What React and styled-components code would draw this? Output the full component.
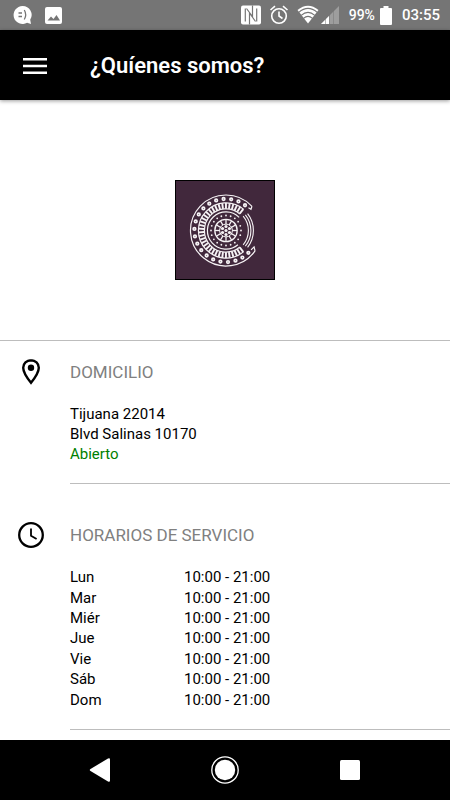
import React from "react";
import styled, { createGlobalStyle } from "styled-components";

const hours = [
    { day: "Lun", time: "10:00 - 21:00" },
    { day: "Mar", time: "10:00 - 21:00" },
    { day: "Miér", time: "10:00 - 21:00" },
    { day: "Jue", time: "10:00 - 21:00" },
    { day: "Vie", time: "10:00 - 21:00" },
    { day: "Sáb", time: "10:00 - 21:00" },
    { day: "Dom", time: "10:00 - 21:00" },
];

// centre of the mandala inside the 100x100 logo
const CX = 51;
const CY = 50.5;

const polar = (r, deg) => {
    const a = (deg * Math.PI) / 180;
    return [CX + r * Math.cos(a), CY + r * Math.sin(a)];
};

const arc = (r, from, to) => {
    const [x1, y1] = polar(r, from);
    const [x2, y2] = polar(r, to);
    const large = to - from > 180 ? 1 : 0;
    return `M${x1} ${y1}A${r} ${r} 0 ${large} 1 ${x2} ${y2}`;
};

const ring = (count, from, to) =>
    Array.from({ length: count }, (_, i) => from + ((to - from) * i) / (count - 1));

function Logo() {
    const [tx, ty] = polar(35.5, -43);
    const [bx, by] = polar(35.5, 35);

    return (
        <LogoBox viewBox="0 0 100 100" role="img" aria-label="Logo">
            <rect x="0.5" y="0.5" width="99" height="99" fill="#41283c" stroke="#000" />
            <g fill="none" stroke="#f6f3f5" strokeWidth="1.2">
                <path d={arc(35.5, 35, 317)} />
                <path d={`M${tx} ${ty}l-1 3l-2.500 -1.500`} />
                <path d={`M${bx} ${by}l-1 -4l-3 3`} />
                <path d={arc(27.6, 50, 310)} />
                <path d={arc(21.6, 50, 310)} />
                <path d={arc(18.6, 50, 315)} />
                <path d={arc(27.4, -38, 38)} strokeWidth="1.1" />
                <path d={arc(24.9, -39, 39)} strokeWidth="1.1" />
                <path d={arc(22.4, -40, 40)} strokeWidth="1.1" />
                {ring(34, 51, 309).map((deg) => {
                    const [x1, y1] = polar(21.8, deg);
                    const [x2, y2] = polar(27.4, deg);
                    return <line key={deg} x1={x1} y1={y1} x2={x2} y2={y2} strokeWidth="1.9" />;
                })}
                {ring(20, 45, 307).map((deg) => {
                    const [x, y] = polar(31.6, deg);
                    return <circle key={deg} cx={x} cy={y} r="1.3" strokeWidth="1.7" />;
                })}
                <circle cx={CX} cy={CY} r="11.2" strokeWidth="1.3" />
                <circle cx={CX} cy={CY} r="6.4" strokeWidth="1" />
                {ring(13, 0, 360).slice(1).map((deg) => {
                    const [x1, y1] = polar(6.2, deg);
                    const [x2, y2] = polar(11, deg);
                    return <line key={deg} x1={x1} y1={y1} x2={x2} y2={y2} strokeWidth="1.3" />;
                })}
            </g>
            <g fill="#f6f3f5">
                {ring(21, 0, 360).slice(1).map((deg) => {
                    const [x, y] = polar(15, deg);
                    return <circle key={deg} cx={x} cy={y} r="0.9" />;
                })}
                {ring(7, 30, 390).slice(1).map((deg) => {
                    const [x, y] = polar(4, deg);
                    return <circle key={deg} cx={x} cy={y} r="1.6" />;
                })}
                <circle cx={CX} cy={CY} r="1.6" />
            </g>
        </LogoBox>
    );
}

function StatusBar() {
    return (
        <Status>
            <StatusGroup $gap={12}>
                <svg width="20" height="20" viewBox="0 0 20 20">
                    <path d="M9.500 1a9 9 0 1 0 4.600 16.800L18 19l-0.800-4.200A9 9 0 0 0 9.500 1z" fill="#fff" />
                    <g fill="none" stroke="#757575" strokeWidth="1.300">
                        <path d="M5.500 8h3.500M5.500 11.500h3.500M11.300 5q2.800 4.700 0 9.500" />
                    </g>
                </svg>
                <svg width="17" height="17" viewBox="0 0 17 17">
                    <rect width="17" height="17" rx="2" fill="#fff" />
                    <path d="M2.500 13.500L6 9.500l2.500 2.500L11.500 8l3.500 5.500z" fill="#757575" />
                </svg>
            </StatusGroup>
            <StatusGroup $gap={8}>
                <svg width="20" height="20" viewBox="0 0 20 20">
                    <rect y="0.500" width="20" height="19" rx="2" fill="#fff" />
                    <path d="M4.300 16.500V3.500M8.500 19.500V8l6 8.500M11.500 0.500V11.500L5.500 3.500M15.700 3.500V16.500" fill="none" stroke="#757575" strokeWidth="1.200" />
                </svg>
                <svg width="20" height="20" viewBox="0 0 20 20" fill="none" stroke="#fff" strokeWidth="1.600">
                    <circle cx="10" cy="11" r="7.300" />
                    <path d="M10 6.500V11l3.500 2.500M1.500 5L6 1.200M18.500 5L14 1.200" />
                </svg>
                <WifiSignal>
                    <svg width="22" height="20" viewBox="0 0 22 20">
                        <path d="M0.500 5Q11-3.500 21.500 5L11 18.500z" fill="#fff" />
                        <path d="M1.800 7.300Q11-0.500 20.200 7.300M4.200 10.300Q11 4.500 17.800 10.300M6.500 13.300Q11 9.500 15.500 13.300" fill="none" stroke="#757575" strokeWidth="1.100" />
                    </svg>
                    <svg width="18" height="20" viewBox="0 0 18 20">
                        <path d="M0 19L18 1v18z" fill="#9d9d9d" />
                        <path d="M0 19L8 11v8z" fill="#fff" />
                        <path d="M4.500 12v7M8.500 8v11M12.500 5v14" stroke="#757575" strokeWidth="0.500" />
                    </svg>
                </WifiSignal>
                <Battery>
                    <StatusText $size={14}>99%</StatusText>
                    <svg width="12" height="19" viewBox="0 0 12 19" fill="#fff">
                        <path d="M3.500 0h5v2H11q1 0 1 1v15q0 1-1 1H1q-1 0-1-1V3q0-1 1-1h2.500z" />
                    </svg>
                </Battery>
                <StatusText $size={15}>03:55</StatusText>
            </StatusGroup>
        </Status>
    );
}

function App() {
    return (
        <Page>
            <GlobalStyle />
            <StatusBar />

            <Header>
                <MenuButton aria-label="Menú">
                    <svg width="24" height="16" viewBox="0 0 24 16" fill="#fff">
                        <path d="M0 0h24v2.600H0zM0 6.700h24v2.600H0zM0 13.400h24V16H0z" />
                    </svg>
                </MenuButton>
                <Title>¿Quíenes somos?</Title>
            </Header>

            <Content>
                <Hero>
                    <Logo />
                </Hero>

                <Section>
                    <IconCell>
                        <svg width="20" height="28" viewBox="0 0 20 28">
                            <path d="M10 2.200c-4.400 0-7.800 3.300-7.800 7.500C2.200 15 10 24.800 10 24.800S17.800 15 17.800 9.700c0-4.200-3.400-7.500-7.800-7.500z" fill="none" stroke="#000" strokeWidth="2.400" />
                            <circle cx="10" cy="9.700" r="3.200" />
                        </svg>
                    </IconCell>
                    <Heading>DOMICILIO</Heading>
                    <Body>
                        <Address>
                            <span>Tijuana 22014</span>
                            <span>Blvd Salinas 10170</span>
                            <Open>Abierto</Open>
                        </Address>
                    </Body>
                </Section>

                <Section $spaced>
                    <IconCell>
                        <svg width="26" height="26" viewBox="0 0 26 26" fill="none" stroke="#000">
                            <circle cx="13" cy="13" r="11.800" strokeWidth="2.300" />
                            <path d="M13 6.500v7.200l5.600 3.400" strokeWidth="1.800" />
                        </svg>
                    </IconCell>
                    <Heading>HORARIOS DE SERVICIO</Heading>
                    <Body>
                        <Hours aria-label="Horarios de servicio">
                            <tbody>
                                {hours.map((row) => (
                                    <tr key={row.day}>
                                        <th scope="row">{row.day}</th>
                                        <td>{row.time}</td>
                                    </tr>
                                ))}
                            </tbody>
                        </Hours>
                    </Body>
                </Section>
            </Content>

            <NavBar>
                <NavButton aria-label="Atrás">
                    <svg width="22" height="24" viewBox="0 0 22 24" fill="#fff">
                        <path d="M1.500 11L19 0.500q2-0.800 2 1v21q0 1.800-2 1L1.500 13q-1.500-1 0-2z" />
                    </svg>
                </NavButton>
                <NavButton aria-label="Inicio">
                    <svg width="28" height="28" viewBox="0 0 28 28">
                        <circle cx="14" cy="14" r="13.200" fill="none" stroke="#fff" strokeWidth="1.300" />
                        <circle cx="14" cy="14" r="10.200" fill="#fff" />
                    </svg>
                </NavButton>
                <NavButton aria-label="Recientes">
                    <svg width="20" height="20" viewBox="0 0 20 20">
                        <rect width="20" height="20" rx="1.500" fill="#fff" />
                    </svg>
                </NavButton>
            </NavBar>
        </Page>
    );
}

const GlobalStyle = createGlobalStyle`
    * {
        box-sizing: border-box;
    }

    body {
        margin: 0;
        background: #fff;
        color: #000;
        font-family: Roboto, "Liberation Sans", sans-serif;
    }

    svg {
        display: block;
        flex-shrink: 0;
    }
`

const Page = styled.div`
    display: flex;
    flex-direction: column;
    min-height: 100vh;
`

const Status = styled.div`
    display: flex;
    align-items: center;
    justify-content: space-between;
    height: 30px;
    padding: 0 10px 0 13px;
    background: #757575;
`

const StatusGroup = styled.div`
    display: flex;
    align-items: center;
    gap: ${(props) => props.$gap}px;
`

const WifiSignal = styled.div`
    display: flex;
    gap: 2px;
`

const Battery = styled.div`
    display: flex;
    align-items: center;
    gap: 5px;
    padding: 0 2px;
`

const StatusText = styled.span`
    font-size: ${(props) => props.$size}px;
    font-weight: 500;
    line-height: 20px;
    color: #fff;
`

const Header = styled.header`
    display: flex;
    align-items: center;
    height: 70px;
    padding-top: 2px;
    background: #000;
    box-shadow: 0 1px 4px rgba(0, 0, 0, 0.4);
`

const MenuButton = styled.button`
    display: flex;
    align-items: center;
    justify-content: center;
    width: 70px;
    height: 48px;
    margin-right: 20px;
    padding: 0;
    border: 0;
    background: none;
    cursor: pointer;
`

const Title = styled.h1`
    margin: 0;
    font-size: 22px;
    font-weight: 600;
    line-height: 30px;
    color: #fff;
`

const Content = styled.main`
    flex: 1;
`

const Hero = styled.div`
    display: flex;
    justify-content: center;
    padding: 80px 0 60px;
    border-bottom: 1px solid #bdbdbd;
`

const LogoBox = styled.svg`
    width: 100px;
    height: 100px;
`

const Section = styled.section`
    display: grid;
    grid-template-columns: 70px 1fr;
    grid-template-rows: 30px auto;
    row-gap: 17px;
    padding-top: ${(props) => (props.$spaced ? 36 : 16)}px;
`

const IconCell = styled.div`
    display: flex;
    align-items: center;
    justify-content: center;
    padding-right: 8px;
`

const Heading = styled.h2`
    margin: 0;
    font-size: 17px;
    font-weight: 400;
    line-height: 30px;
    color: #808080;
`

const Body = styled.div`
    grid-column: 2;
    padding-bottom: 19px;
    border-bottom: 1px solid #bdbdbd;
    font-size: 15px;
    line-height: 20px;
`

const Address = styled.address`
    display: flex;
    flex-direction: column;
    font-style: normal;
`

const Open = styled.span`
    color: #008000;
`

const Hours = styled.table`
    width: 60%;
    height: 143px;
    border-collapse: collapse;

    th,
    td {
        padding: 0;
        font-weight: 400;
        text-align: left;
    }

    th {
        width: 50%;
    }
`

const NavBar = styled.nav`
    display: grid;
    grid-template-columns: repeat(3, 125px);
    justify-content: center;
    height: 60px;
    background: #000;
`

const NavButton = styled.button`
    display: flex;
    align-items: center;
    justify-content: center;
    padding: 0;
    border: 0;
    background: none;
    cursor: pointer;
`

export default App;
